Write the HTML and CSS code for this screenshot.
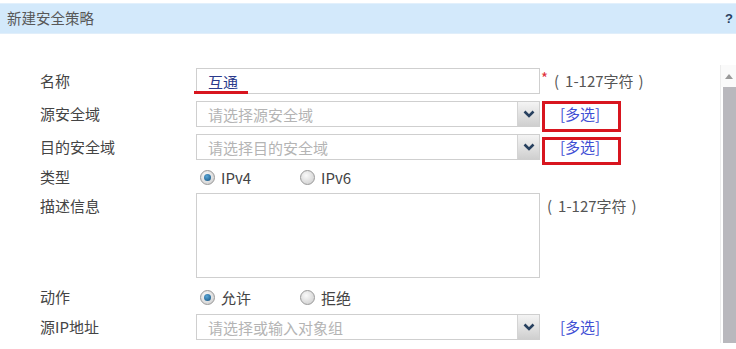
FILE: index.html
```html
<!DOCTYPE html>
<html lang="zh">
<head>
<meta charset="utf-8">
<title>新建安全策略</title>
<link rel="stylesheet" href="styles.css">
</head>
<body>
<div class="header">
  <span class="title">新建安全策略</span>
  <span class="help">?</span>
</div>
<div class="main">
  <div class="form">
    <div class="row r1">
      <div class="label">名称</div>
      <div class="ctrl input name-input">
        <span class="value">互通</span>
        <span class="redline"></span>
      </div>
      <span class="req">*</span><span class="hint">(<span class="hin">1-127字符</span>)</span>
    </div>
    <div class="row r2">
      <div class="label">源安全域</div>
      <div class="ctrl select">
        <span class="ph">请选择源安全域</span>
        <span class="dd"><svg width="12" height="8" viewBox="0 0 12 8"><path d="M1.5 1.5 L6 6 L10.5 1.5" fill="none" stroke="#27405f" stroke-width="2.6"/></svg></span>
      </div>
      <span class="multi boxed">[多选]</span>
    </div>
    <div class="row r3">
      <div class="label">目的安全域</div>
      <div class="ctrl select">
        <span class="ph">请选择目的安全域</span>
        <span class="dd"><svg width="12" height="8" viewBox="0 0 12 8"><path d="M1.5 1.5 L6 6 L10.5 1.5" fill="none" stroke="#27405f" stroke-width="2.6"/></svg></span>
      </div>
      <span class="multi boxed b2">[多选]</span>
    </div>
    <div class="row r4">
      <div class="label">类型</div>
      <div class="radios">
        <span class="radio on"></span><span class="rtext">IPv4</span>
        <span class="radio"></span><span class="rtext">IPv6</span>
      </div>
    </div>
    <div class="row r5">
      <div class="label">描述信息</div>
      <div class="ctrl textarea"></div>
      <span class="hint hint2">(<span class="hin">1-127字符</span>)</span>
    </div>
    <div class="row r6">
      <div class="label">动作</div>
      <div class="radios">
        <span class="radio on"></span><span class="rtext">允许</span>
        <span class="radio"></span><span class="rtext">拒绝</span>
      </div>
    </div>
    <div class="row r7">
      <div class="label">源IP地址</div>
      <div class="ctrl select">
        <span class="ph">请选择或输入对象组</span>
        <span class="dd"><svg width="12" height="8" viewBox="0 0 12 8"><path d="M1.5 1.5 L6 6 L10.5 1.5" fill="none" stroke="#27405f" stroke-width="2.6"/></svg></span>
      </div>
      <span class="multi">[多选]</span>
    </div>
  </div>
  <div class="scrollbar">
    <div class="sb-up"><svg width="8" height="5" viewBox="0 0 8 5"><path d="M0 5 L4 0 L8 5 Z" fill="#9a9a9a"/></svg></div>
    <div class="sb-thumb"></div>
  </div>
</div>
</body>
</html>
```
FILE: styles.css
```css
* { box-sizing: border-box; }
html, body { margin: 0; padding: 0; background: #fff; }
body {
  font-family: "Noto Sans CJK SC", "Noto Sans", sans-serif;
  font-size: 15px;
  color: #444;
  width: 736px;
  height: 349px;
  overflow: hidden;
}
.header {
  margin-top: 3px;
  height: 31px;
  background: #d3e9fb;
  border-top: 1px solid #e2f0fc;
  border-bottom: 1px solid #e0eefa;
  display: flex;
  align-items: center;
  justify-content: space-between;
  padding: 0 0 0 7px;
}
.title { font-size: 14.5px; color: #585858; line-height: 1; }
.help {
  font-family: "Liberation Sans", Arial, sans-serif;
  font-weight: bold;
  font-size: 13px;
  color: #2a4060;
  margin-right: 3px;
}
.main { display: flex; }
.form {
  flex: 1;
  padding: 34px 0 0 40px;
  display: flex;
  flex-direction: column;
}
.row { display: flex; align-items: flex-start; }
.label { width: 156px; line-height: 26px; color: #444; }
.ctrl {
  width: 344px;
  height: 26px;
  border: 1px solid #cfcfcf;
  background: #fff;
  position: relative;
  display: flex;
  align-items: center;
}
.r1, .r2, .r3 { height: 33px; }
.r4 { height: 20px; align-items: center; }
.r4 .label, .r6 .label { line-height: 20px; }
.r5 { margin-top: 6px; height: 85px; }
.r5 .label { line-height: 26px; }
.r6 { margin-top: 6px; height: 26px; align-items: center; }
.r7 { margin-top: 4px; }
.input .value { padding-left: 11px; color: #2b3a8c; }
.redline {
  position: absolute;
  left: -3px;
  top: 22px;
  width: 54px;
  height: 3px;
  background: #d8151f;
}
.req { color: #e0303a; margin-left: 1px; line-height: 20px; }
.hint { color: #555; line-height: 26px; margin-left: 6px; }
.hin { padding: 0 5px 0 6px; }
.hint2 { margin-left: 7px; }
.ph { padding-left: 11px; color: #b4b4b4; flex: 1; white-space: nowrap; }
.dd {
  width: 22px;
  height: 24px;
  border-left: 1px solid #d4d4d4;
  background: linear-gradient(#f4f4f4, #cfcfcf);
  display: flex;
  align-items: center;
  justify-content: center;
}
.textarea { height: 85px; }
.multi {
  color: #3f4fd4;
  line-height: 26px;
  margin-left: 20px;
  position: relative;
}
.boxed::before {
  content: "";
  position: absolute;
  left: -18px;
  top: 0;
  width: 73px;
  height: 25px;
  border: 3px solid #d8151f;
}
.b2::before { top: 3px; height: 22px; }
.radios { display: flex; align-items: center; padding-left: 4px; }
.radio {
  width: 15px;
  height: 15px;
  border-radius: 50%;
  border: 1px solid #999;
  background: radial-gradient(circle at 40% 35%, #fafafa, #c9c9c9);
  position: relative;
}
.radio.on::after {
  content: "";
  position: absolute;
  left: 3px;
  top: 3px;
  width: 7px;
  height: 7px;
  border-radius: 50%;
  background: radial-gradient(circle at 40% 35%, #5aa6d6, #12507e);
}
.rtext { margin-left: 6px; width: 79px; color: #444; }
.scrollbar {
  width: 16px;
  margin-top: 31px;
  height: 278px;
  border-left: 1px solid #ececec;
  display: flex;
  flex-direction: column;
}
.sb-up {
  height: 22px;
  display: flex;
  align-items: center;
  justify-content: center;
  background: #fafafa;
}
.sb-thumb { flex: 1; background: #b9b8bd; margin-left: 2px; }
```
